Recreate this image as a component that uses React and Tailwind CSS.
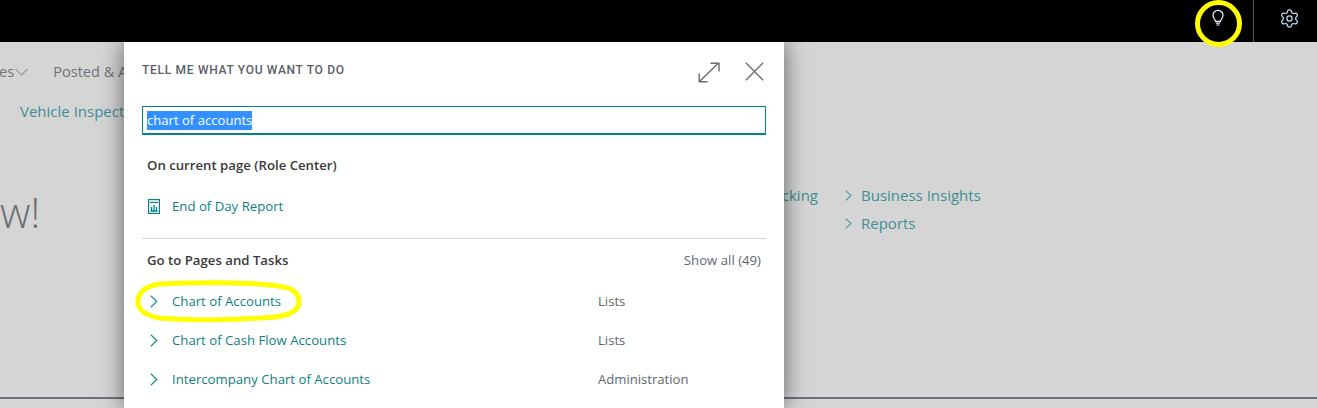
import React from "react";
import { Settings } from "lucide-react";

const sans = "[font-family:'Open_Sans','Noto_Sans',sans-serif]";

function Chevron({ className, w = 8, h = 13 }) {
  return (
    <svg width={w} height={h} viewBox="0 0 8 13" preserveAspectRatio="none" fill="none" stroke="currentColor" strokeWidth="1.200" className={className}>
      <path d="M.8.8l6 5.700-6 5.700" />
    </svg>
  );
}

function Row({ label, category }) {
  return (
    <div className="flex items-center h-[39px]">
      <div className="w-[30px] pl-[8px] text-[#1f9196]"><Chevron /></div>
      <div className="w-[426px] text-[#0f7f84] text-[13.2px]">{label}</div>
      <div className="text-[#5f6670] text-[13.1px]">{category}</div>
    </div>
  );
}

export default function App() {
  return (
    <div className={`relative w-[1317px] h-[408px] overflow-hidden bg-[#d5d5d5] ${sans}`}>
      {/* Top bar */}
      <div className="h-[42px] bg-black flex justify-end items-stretch">
        <div className="w-[71px] flex justify-center pt-[9px] text-[#eaf6ff]">
          <svg width="18" height="18" viewBox="0 0 18 18" fill="none" stroke="currentColor" strokeWidth="1.2">
            <path d="M6.600 12.300c-.2-1.600-2.600-2.800-2.600-6A5 5 0 0 1 14 6.300c0 3.200-2.400 4.400-2.600 6z" />
            <path d="M6.800 14.200h4.400M7.500 16h3" />
          </svg>
        </div>
        <div className="w-[64px] border-l border-[#555] flex justify-center pt-[8px] pl-[7px] text-[#bfe3ff]">
          <Settings size={21} strokeWidth={1.4} />
        </div>
      </div>

      {/* Page behind the dialog */}
      <div className="h-[357px] border-b-2 border-[#6d7178]">
        <div className="flex items-center h-[58px] pt-[1px] text-[14.600px] text-[#6f7378] whitespace-nowrap">
          <span className="ml-[-1px]">es</span>
          <svg width="13" height="8" viewBox="0 0 13 8" fill="none" stroke="currentColor" strokeWidth="1" className="ml-[1px]"><path d="M.5 1l6 6 6-6" /></svg>
          <span className="ml-[25px]">Posted &amp; A</span>
        </div>
        <div className="pl-[20px] text-[15px] leading-[22px] text-[#3f8f92] whitespace-nowrap">Vehicle Inspect</div>
        <div className="flex mt-[31px]">
          <div className="w-[640px] pt-[34px] text-[42px] leading-[50px] font-light text-[#6b6f74]">w!</div>
          <div className="w-[178px] pt-[28px] text-right text-[15px] leading-[28px] text-[#3f8f92]">Tracking</div>
          <div className="ml-[27px] pt-[28px] text-[15px] leading-[28px] text-[#3f8f92]">
            <div className="flex items-center"><Chevron w={7} h={11} className="mr-[9px]" />Business Insights</div>
            <div className="flex items-center"><Chevron w={7} h={11} className="mr-[9px]" />Reports</div>
          </div>
        </div>
      </div>

      {/* Dialog */}
      <div className="absolute left-[124px] top-[42px] w-[660px] h-[366px] bg-white px-[18px] shadow-[0_0_22px_rgba(0,0,0,0.55)] [clip-path:inset(0_-30px_-30px_-30px)]">
        <div className="flex items-start justify-between h-[64px]">
          <div className="pt-[20px] font-['Roboto'] font-medium text-[12px] leading-[16px] tracking-[0.7px] text-[#5a6068]">TELL ME WHAT YOU WANT TO DO</div>
          <div className="flex items-start gap-[25px] pt-[20px] text-[#6b6b6b]">
            <svg width="22" height="21" viewBox="0 0 22 21" fill="none" stroke="currentColor" strokeWidth="1.400"><path d="M1.500 19.500L20.500 1M12.500 1.200H21V9.500M1.200 11.500v8.200H9.500" /></svg>
            <svg width="19" height="19" viewBox="0 0 19 19" fill="none" stroke="currentColor" strokeWidth="1.300" className="mr-[2px]"><path d="M.8.8l17.400 17.400M18.200.8L.8 18.200" /></svg>
          </div>
        </div>
        <div className="h-[29px] border border-[#008489] border-b-2 pl-[4px] pt-[1px] flex items-center text-[13.100px] text-white">
          <span className="bg-[#3390ff] leading-[19px]">chart of accounts</span>
        </div>
        <div className="pl-[5px] pt-[21px] text-[13.200px] leading-[18px] font-semibold text-[#3a3a3a]">On current page (Role Center)</div>
        <div className="flex items-center pl-[6px] mt-[23px] h-[20px] text-[13.200px] text-[#0f7f84]">
          <svg width="12" height="15" viewBox="0 0 12 15" fill="none" stroke="#008489" strokeWidth="1.200" className="mr-[12px] mt-[-2px]">
            <rect x=".6" y=".6" width="10.800" height="13.800" />
            <path d="M2 3.400h8" />
            <path d="M3.500 11.500V8M6 11.500V6M8.500 11.500V8M2.500 12h7" strokeWidth="1.300" />
          </svg>
          End of Day Report
        </div>
        <div className="mt-[21px] border-t border-[#d8d8d8]" />
        <div className="flex justify-between px-[5px] pt-[12px] h-[43px] text-[13.200px] leading-[18px]">
          <span className="font-semibold text-[#3a3a3a]">Go to Pages and Tasks</span>
          <span className="text-[#5f6670]">Show all (49)</span>
        </div>
        <Row label="Chart of Accounts" category="Lists" />
        <Row label="Chart of Cash Flow Accounts" category="Lists" />
        <Row label="Intercompany Chart of Accounts" category="Administration" />
      </div>

      {/* Yellow annotations */}
      <div className="absolute left-[1195px] top-0 w-[47px] h-[47px] rounded-full border-[5px] border-[#ffff00]" />
      <svg className="absolute left-0 top-0" width="320" height="340" fill="none" stroke="#ffff00" strokeWidth="5">
        <path d="M160 284C200 282 250 282 278 286C294 288 299 294 299 301C299 311 290 315 275 317C240 320 190 321 160 318C146 316 138 310 138 302C138 292 146 286 160 284Z" />
      </svg>
    </div>
  );
}
